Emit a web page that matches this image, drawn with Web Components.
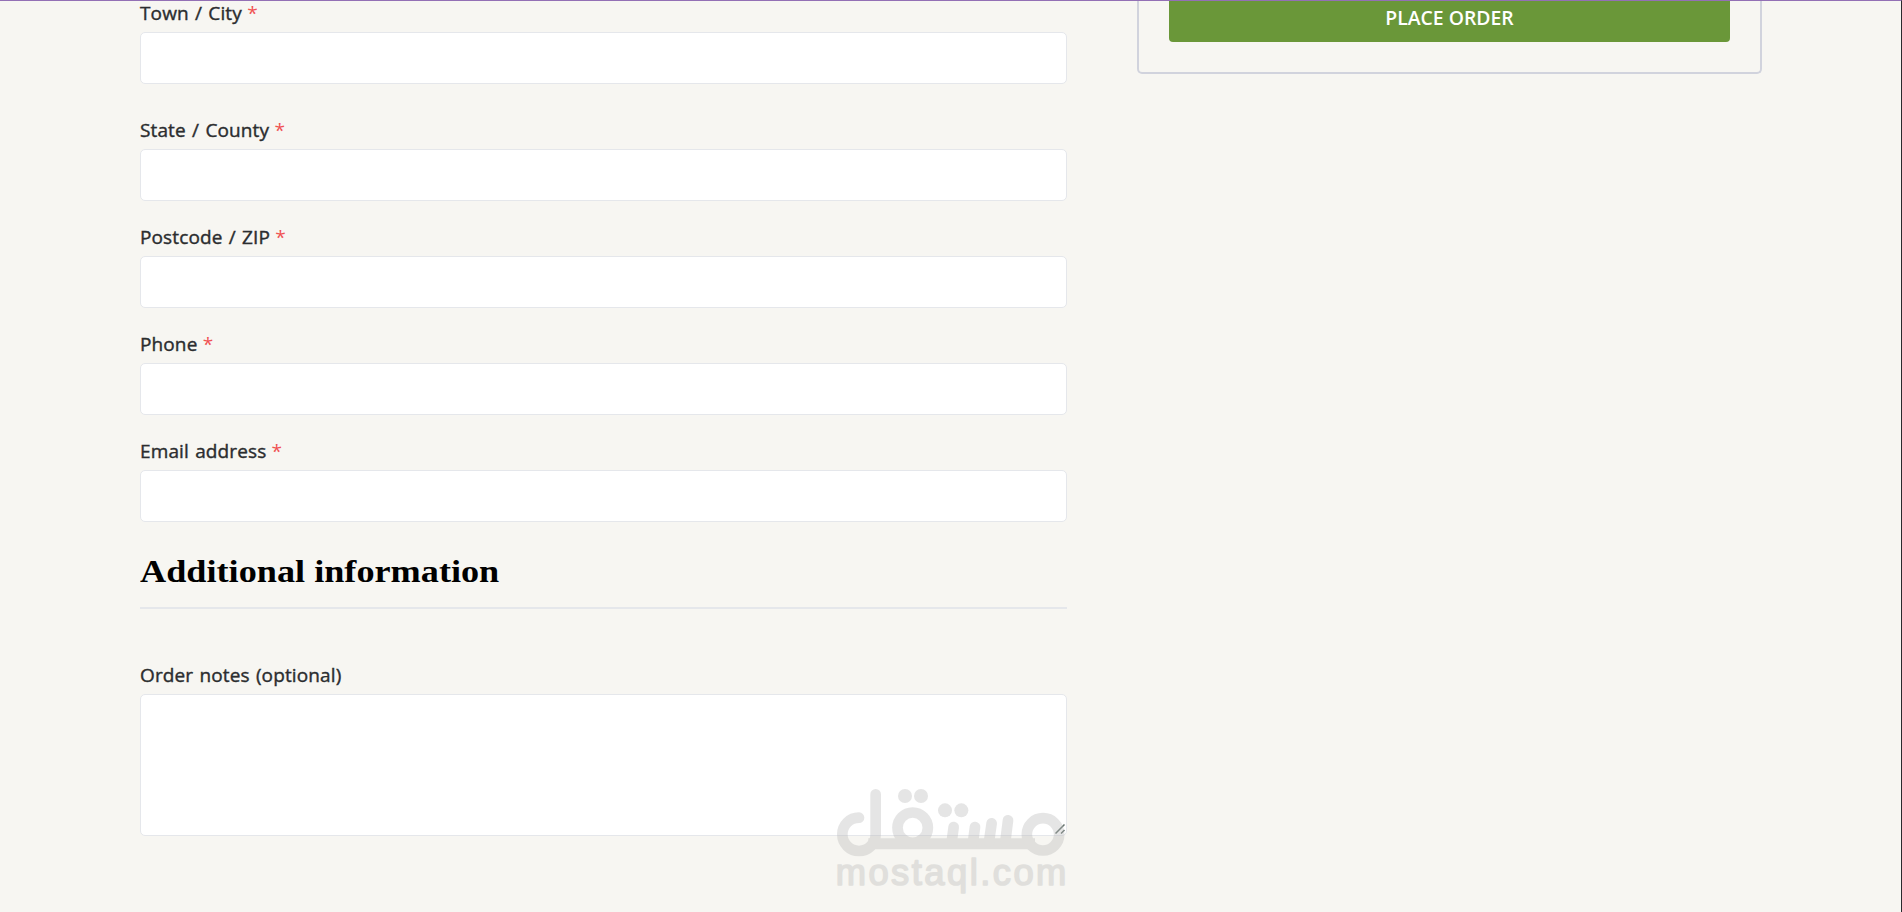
<!DOCTYPE html>
<html lang="en">
<head>
<meta charset="utf-8">
<title>Checkout</title>
<style>
  body {
    margin: 0;
    background: #f7f6f2;
    font-family: "Open Sans", sans-serif;
  }
</style>
</head>
<body>
<checkout-page>
  <form-field label="Town / City" required style="--gap: 34px"></form-field>
  <form-field label="State / County" required></form-field>
  <form-field label="Postcode / ZIP" required></form-field>
  <form-field label="Phone" required></form-field>
  <form-field label="Email address" required></form-field>
  <section-title>Additional information</section-title>
  <form-field label="Order notes (optional)" multiline></form-field>
  <order-box slot="aside">Place order</order-box>
</checkout-page>

<script>
class CheckoutPage extends HTMLElement {
  constructor() {
    super();
    this.attachShadow({ mode: "open" }).innerHTML = `
      <style>
        :host {
          display: block;
          box-sizing: border-box;
          height: 912px;
          overflow: hidden;
          border-top: 1px solid #9370b5;
          border-right: 1px solid #2b2a2e;
        }
        .columns {
          display: grid;
          grid-template-columns: 927px 625px;
          column-gap: 70px;
          align-items: start;
          padding-left: 140px;
        }
        main {
          position: relative;
        }
        water-mark {
          position: absolute;
          left: 680px;
          top: 769px;
        }
      </style>
      <div class="columns">
        <main><slot></slot><water-mark></water-mark></main>
        <aside><slot name="aside"></slot></aside>
      </div>
    `;
  }
}

class FormField extends HTMLElement {
  constructor() {
    super();
    this._shadowRoot = this.attachShadow({ mode: "open" });
  }

  connectedCallback() {
    const multiline = this.hasAttribute("multiline");
    this._shadowRoot.innerHTML = `
      <style>
        :host {
          display: block;
          margin-bottom: var(--gap, 24px);
        }
        label {
          display: block;
          height: 31px;
          line-height: 24px;
          font-size: 19px;
          letter-spacing: 0.12px;
          word-spacing: 1.2px;
          -webkit-text-stroke: 0.4px;
          color: #2b2d2f;
          white-space: nowrap;
        }
        .required {
          margin-left: -1px;
          color: #f05252;
          -webkit-text-stroke: 0;
        }
        input, textarea {
          display: block;
          box-sizing: border-box;
          width: 100%;
          height: 52px;
          margin: 0;
          border: 1px solid #e5e7eb;
          border-radius: 5px;
          background: #fff;
          outline: none;
        }
        textarea {
          height: 142px;
          resize: none;
        }
        .box {
          position: relative;
        }
        svg {
          position: absolute;
          right: 2px;
          bottom: 2px;
        }
      </style>
      <label for="control"><span class="text"></span>${
        this.hasAttribute("required") ? ` <span class="required">*</span>` : ""
      }</label>
      <div class="box">${
        multiline
          ? `<textarea id="control"></textarea>
             <svg width="10" height="10" viewBox="0 0 10 10" stroke="#66736f" stroke-width="1.5"><path d="M.5 9.5l9-9M6 9.5l3.5-3.5"/></svg>`
          : `<input id="control" type="text">`
      }</div>
    `;
    this._shadowRoot.querySelector(".text").textContent = this.getAttribute("label");
  }
}

class SectionTitle extends HTMLElement {
  constructor() {
    super();
    this.attachShadow({ mode: "open" }).innerHTML = `
      <style>
        :host {
          display: block;
          box-sizing: border-box;
          height: 63px;
          margin-bottom: 54px;
          border-bottom: 2px solid #e5e7eb;
        }
        h3 {
          display: inline-block;
          margin: 0;
          padding-top: 5px;
          font: bold 32px/40px "Liberation Serif", serif;
          color: #000;
          white-space: nowrap;
          transform: scaleX(1.132);
          transform-origin: left;
        }
      </style>
      <h3><slot></slot></h3>
    `;
  }
}

class OrderBox extends HTMLElement {
  constructor() {
    super();
    this.attachShadow({ mode: "open" }).innerHTML = `
      <style>
        :host {
          display: block;
          box-sizing: border-box;
          height: 73px;
          padding: 0 30px 30px;
          border: 2px solid #d1d3dd;
          border-top: 0;
          border-radius: 0 0 5px 5px;
        }
        button {
          display: block;
          width: 100%;
          height: 41px;
          margin: 0;
          padding: 0 0 7px;
          border: 0;
          border-radius: 0 0 4px 4px;
          background: #6a9739;
          color: #fff;
          font: 600 19.4px/34px "Open Sans", sans-serif;
          text-transform: uppercase;
        }
      </style>
      <button type="button"><slot></slot></button>
    `;
  }
}

class WaterMark extends HTMLElement {
  constructor() {
    super();
    this.attachShadow({ mode: "open" }).innerHTML = `
      <style>
        :host {
          display: block;
          width: 270px;
          height: 142px;
          opacity: 0.35;
          pointer-events: none;
        }
        svg {
          display: block;
        }
        text {
          font: 109px "Liberation Sans", sans-serif;
          fill: #b6b6b6;
          stroke: #b6b6b6;
          stroke-width: 5;
          stroke-linejoin: round;
        }
      </style>
      <svg width="270" height="142" viewBox="0 0 810 426" fill="#b6b6b6">
        <g fill="none" stroke="#b6b6b6" stroke-width="32" stroke-linecap="round">
          <path d="M117 143A50 50 0 1 0 167 193V73"/>
          <path d="M145 221H645" stroke-width="33" stroke-linecap="butt"/>
          <circle cx="278" cy="173" r="45.5"/>
          <circle cx="669" cy="193" r="48.5"/>
          <path d="M401 171l-6 45M465 171l-6 45M515 160l-8 55M564 151l-8 64"/>
        </g>
        <circle cx="255" cy="78" r="21"/>
        <circle cx="303" cy="78" r="21"/>
        <circle cx="375" cy="121" r="21"/>
        <circle cx="424" cy="121" r="21"/>
        <text x="47" y="346" textLength="692">mostaql.com</text>
      </svg>
    `;
  }
}

customElements.define("water-mark", WaterMark);
customElements.define("form-field", FormField);
customElements.define("section-title", SectionTitle);
customElements.define("order-box", OrderBox);
customElements.define("checkout-page", CheckoutPage);
</script>
</body>
</html>
